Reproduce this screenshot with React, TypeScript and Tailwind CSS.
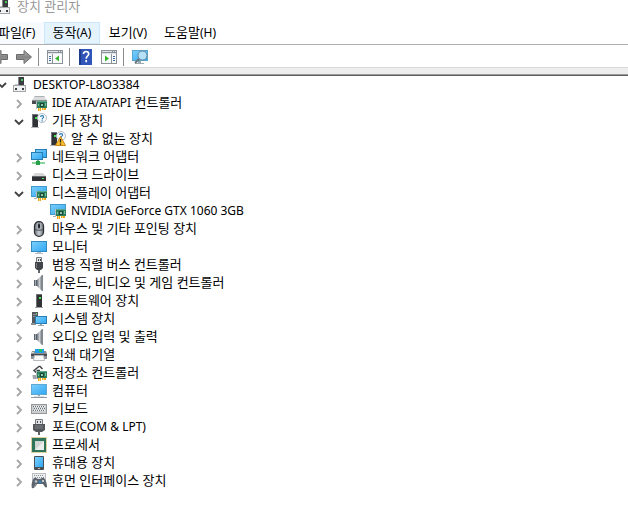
import React, { useState } from "react";

type IconName =
  | "root" | "ide" | "other" | "unknown" | "network" | "disk" | "display" | "mouse" | "monitor" | "usb"
  | "sound" | "software" | "system" | "printer" | "storage" | "computer" | "keyboard" | "port" | "cpu"
  | "portable" | "hid";

const Defs = () => (
  <svg width="0" height="0" className="absolute" aria-hidden="true">
    <defs>
      <linearGradient id="screen" x1="0" y1="0" x2="1" y2="1">
        <stop offset="0" stopColor="#7cd0fb" />
        <stop offset="1" stopColor="#2fa6f3" />
      </linearGradient>
      <linearGradient id="metal" x1="0" y1="0" x2="1" y2="0">
        <stop offset="0" stopColor="#6b7178" />
        <stop offset="0.5" stopColor="#c9ced3" />
        <stop offset="1" stopColor="#70767c" />
      </linearGradient>
      <linearGradient id="arrow" x1="0" y1="0" x2="0" y2="1">
        <stop offset="0" stopColor="#b5b5b5" />
        <stop offset="0.5" stopColor="#858585" />
        <stop offset="1" stopColor="#a8a8a8" />
      </linearGradient>
    </defs>
  </svg>
);

const Board = () => (
  <g>
    <path d="M5.5 6v8" stroke="#b4babf" />
    <rect x="6" y="6" width="10" height="7" fill="#2b7f5d" />
    <path d="M6 6.5h10" stroke="#5ca888" />
    <rect x="9" y="8" width="4" height="4" fill="#1b4638" />
    <rect x="10" y="9" width="2" height="2" fill="#8cc9ab" />
    <path d="M14 8h1v3h-1zM7 9h1v2H7z" fill="#79bd9c" />
    <path d="M7 13h3v3H7zM11 13h4v2h-4z" fill="#eba21c" />
    <path d="M8.5 13v3M12.5 13v2" stroke="#fbd66d" />
  </g>
);

const Question = () => (
  <g>
    <circle cx="11" cy="5" r="4.5" fill="#f7fbfe" stroke="#b3bec7" />
    <path d="M9.6 4c0-1.9 3-1.9 3 0 0 1.2-1.5 1.1-1.5 2.4M11.1 7.2v1.2" fill="none" stroke="#2679b8" strokeWidth="1.1" />
  </g>
);

const Tower = () => (
  <g>
    <path d="M1 1h6v13H1z" fill="#303236" />
    <path d="M1 1h1v13H1zM1 1h6v1H1z" fill="#74787d" />
    <path d="M0 14h8v1H0z" fill="#b3b6b9" />
    <path d="M4 4h2v2H4z" fill="#3fe24d" />
  </g>
);

const art: Record<IconName, React.ReactNode> = {
  root: (
    <g>
      <path d="M6 0h6v8H6z" fill="#3b3d40" />
      <path d="M6 0h1v8H6z" fill="#85888b" />
      <path d="M9 2h2v2H9z" fill="#45c95a" />
      <path d="M3 7h3v1h6v1H2z" fill="#c4c7ca" />
      <path d="M1 8h13v7H1z" fill="#a3a6a9" />
      <path d="M2 9h11v5H2z" fill="#f0f1f2" />
      <path d="M3 11h2v2H3zM10 11h2v2h-2z" fill="#3a3c3f" />
    </g>
  ),
  ide: (
    <g>
      <path d="M4 1h9l3 4H1z" fill="#d9dbdd" />
      <path d="M4 1h9l1 1H3z" fill="#aeb1b4" />
      <path d="M1 5h15v4H1z" fill="#4a4d50" />
      <path d="M1 5h15v1H1z" fill="#8a8d90" />
      <Board />
    </g>
  ),
  other: <g><Tower /><Question /></g>,
  unknown: (
    <g>
      <Tower />
      <Question />
      <path d="M10.5 5.5 15.5 14.5h-10z" fill="#fdbf2d" stroke="#c98a18" />
      <path d="M10.5 8v3.6M10.5 12.4v1.3" stroke="#262626" strokeWidth="1.3" />
    </g>
  ),
  network: (
    <g>
      <rect x="4.5" y="0.5" width="11" height="8" fill="url(#screen)" stroke="#287db3" />
      <rect x="0.5" y="3.5" width="11" height="7" fill="url(#screen)" stroke="#287db3" />
      <path d="M6 11h2v2H6z" fill="#59b873" />
      <path d="M1 13h13v2H1z" fill="#8ad49e" />
      <path d="M5 12h4v4H5z" fill="#27a04a" />
    </g>
  ),
  disk: (
    <g>
      <path d="M4 6h8l3 3H1z" fill="#d8d8d8" />
      <path d="M1 9h14v5H1z" fill="#2f3134" />
      <path d="M1 9h14v1H1z" fill="#65686b" />
      <path d="M11 11h2v1h-2z" fill="#4ee85d" />
    </g>
  ),
  display: (
    <g>
      <rect x="0.5" y="1.5" width="15" height="10" fill="url(#screen)" stroke="#4199cc" />
      <path d="M3 13h3v1H3z" fill="#a8b2b9" />
      <Board />
    </g>
  ),
  mouse: (
    <g>
      <rect x="3.5" y="0.7" width="9" height="14.6" rx="4.4" fill="url(#metal)" stroke="#2c3035" strokeWidth="1.3" />
      <path d="M8 1v7M4 8.5c2 1 6 1 8 0" fill="none" stroke="#4a4f55" />
      <rect x="7" y="3" width="2" height="4" rx="1" fill="#1c2026" />
    </g>
  ),
  monitor: (
    <g>
      <rect x="0.5" y="2.5" width="15" height="10" fill="url(#screen)" stroke="#308abd" />
      <path d="M6 13h4v1h2v1H4v-1h2z" fill="#b6c0c6" />
    </g>
  ),
  usb: (
    <g>
      <path d="M5.5 0.5h5v5h-5z" fill="#e3e5e7" stroke="#777b7f" />
      <path d="M7 2h1v2H7zM9 2h1v2H9z" fill="#484c50" />
      <path d="M4 5h8v6l-2 2H6l-2-2z" fill="#414549" />
      <path d="M5 6h1v5H5z" fill="#74797e" />
      <path d="M7 13h2v3H7z" fill="#606468" />
    </g>
  ),
  sound: (
    <g>
      <path d="M3 5h3v6H3z" fill="#59626b" />
      <path d="M6 5 11 0v16L6 11z" fill="url(#metal)" />
      <path d="M11.5 0v16" stroke="#7f8992" />
      <path d="M4 5h1v6H4z" fill="#a2abb3" />
    </g>
  ),
  software: (
    <g>
      <path d="M5 1h6v13H5z" fill="#303236" />
      <path d="M5 1h1v13H5zM5 1h6v1H5z" fill="#6c7074" />
      <path d="M4 14h8v1H4z" fill="#9da1a5" />
      <path d="M8 4h2v2H8z" fill="#41e34e" />
    </g>
  ),
  system: (
    <g>
      <path d="M1 1h6v12H1z" fill="#54585c" />
      <path d="M2 3h4v1H2zM2 5h4v1H2z" fill="#8d9296" />
      <path d="M0 12h5v2H0z" fill="#8d9296" />
      <path d="M5 2h1v1H5z" fill="#50e35b" />
      <rect x="4.5" y="5.5" width="11" height="7" fill="url(#screen)" stroke="#287db3" />
      <path d="M9 13h2v1h2v1H7v-1h2z" fill="#9ba5ac" />
    </g>
  ),
  printer: (
    <g>
      <path d="M4 2h9v4H4z" fill="#1f9ee9" />
      <path d="M8 2h3v3H8z" fill="#27c15d" />
      <path d="M1 4h3v2h9V4h2l1 3v5H0V7z" fill="#8b8f93" />
      <path d="M0 7h16v2H0z" fill="#484b4f" />
      <path d="M1 5h2v1H1z" fill="#d4d7da" />
      <path d="M3.5 8.5h9l1 5h-11z" fill="#fafafa" stroke="#b5b9bc" />
    </g>
  ),
  storage: (
    <g>
      <path d="M8.5 1 3 5.5 8 10M8.5 1l3 3M5.5 5.5H9" fill="none" stroke="#414549" strokeWidth="1.5" />
      <path d="M1 10h7v4H2z" fill="#c6c9cb" />
      <path d="M2 11h5M2 13h5" stroke="#7f8488" />
      <Board />
    </g>
  ),
  computer: (
    <g>
      <rect x="0.5" y="1.5" width="15" height="10" fill="url(#screen)" stroke="#5da9d3" />
      <path d="M7 12h2v1H7z" fill="#9ba8b0" />
      <path d="M0 14h16v1H0z" fill="#8c9aa3" />
      <path d="M3 13h10v1H3z" fill="#d5dde1" />
    </g>
  ),
  keyboard: (
    <g>
      <rect x="0.5" y="3.5" width="15" height="9" fill="#cbced0" stroke="#96999c" />
      <path d="M2 5.5h12M3 7.5h11M2 9.5h12" stroke="#f5f6f7" />
      <path d="M2 5.5h12M3 7.5h11M2 9.5h12" stroke="#6a6f74" strokeDasharray="1 1" />
    </g>
  ),
  port: (
    <g>
      <path d="M4.5 0.5h7v5h-7z" fill="#e0e2e4" stroke="#777b7f" />
      <path d="M6 2h1v2H6zM9 2h1v2H9z" fill="#4c5054" />
      <path d="M2 5h12v6l-3 2H5l-3-2z" fill="#53565a" />
      <path d="M4 7h8M4 9h8" stroke="#7f8387" />
      <path d="M7 13h2v3H7z" fill="#606468" />
    </g>
  ),
  cpu: (
    <g>
      <rect x="0.5" y="0.5" width="15" height="15" fill="#ffffff" stroke="#b9a04c" strokeDasharray="1 1" />
      <path d="M1 1h14v14H1z" fill="#2f7358" />
      <path d="M4 4h9v9H4z" fill="#d0d4d2" />
      <path d="M4 13 13 4v9z" fill="#eceeed" />
    </g>
  ),
  portable: (
    <g>
      <rect x="3" y="1" width="10" height="14" rx="1" fill="#494f55" />
      <path d="M4 2h8v10H4z" fill="url(#screen)" />
      <path d="M7 13h2v1H7z" fill="#b9c0c5" />
    </g>
  ),
  hid: (
    <g>
      <rect x="1.5" y="0.5" width="13" height="7" fill="#eceeef" stroke="#b9bdc0" />
      <path d="M3 2.5h10M4 4.5h10" stroke="#8a8f93" strokeDasharray="1 1" />
      <path d="M3 5c2-1 3 1 5 1s3-2 5-1c2 2 3 6 3 9-2 2-3-2-4-3H6c-1 2-3 5-5 4-1-2 0-8 2-10z" fill="#5b646d" />
      <path d="M3 14c1-1 1-2 2-3" fill="none" stroke="#9aa3ab" />
      <circle cx="5" cy="8.5" r="1.3" fill="#c2c9cf" />
      <circle cx="9" cy="9" r="1.2" fill="#2c8dcb" />
      <path d="M11 7h2v2h-2z" fill="#c2c9cf" />
    </g>
  ),
};

const Icon = ({ name }: { name: IconName }) => (
  <svg viewBox="0 0 16 16" className="size-4 shrink-0" aria-hidden="true">{art[name]}</svg>
);

const Chevron = ({ open }: { open: boolean }) => (
  <svg viewBox="0 0 10 10" className="size-[10px]" fill="none" strokeWidth="1.8" aria-hidden="true">
    {open ? <path d="M1 3l4 4 4-4" stroke="#404040" /> : <path d="M3 1l4 4-4 4" stroke="#a6a6a6" />}
  </svg>
);

type Device = { label: string; icon: IconName; children?: Device[]; open?: boolean };

const devices: Device[] = [
  { label: "IDE ATA/ATAPI 컨트롤러", icon: "ide" },
  { label: "기타 장치", icon: "other", open: true, children: [{ label: "알 수 없는 장치", icon: "unknown" }] },
  { label: "네트워크 어댑터", icon: "network" },
  { label: "디스크 드라이브", icon: "disk" },
  { label: "디스플레이 어댑터", icon: "display", open: true, children: [{ label: "NVIDIA GeForce GTX 1060 3GB", icon: "display" }] },
  { label: "마우스 및 기타 포인팅 장치", icon: "mouse" },
  { label: "모니터", icon: "monitor" },
  { label: "범용 직렬 버스 컨트롤러", icon: "usb" },
  { label: "사운드, 비디오 및 게임 컨트롤러", icon: "sound" },
  { label: "소프트웨어 장치", icon: "software" },
  { label: "시스템 장치", icon: "system" },
  { label: "오디오 입력 및 출력", icon: "sound" },
  { label: "인쇄 대기열", icon: "printer" },
  { label: "저장소 컨트롤러", icon: "storage" },
  { label: "컴퓨터", icon: "computer" },
  { label: "키보드", icon: "keyboard" },
  { label: "포트(COM & LPT)", icon: "port" },
  { label: "프로세서", icon: "cpu" },
  { label: "휴대용 장치", icon: "portable" },
  { label: "휴먼 인터페이스 장치", icon: "hid" },
];

/* Latin runs are set one size below Hangul so that both look equally large. */
const Label = ({ text }: { text: string }) => (
  <span className="block whitespace-nowrap pb-[2px]">
    {text.split(/([A-Za-z0-9(][A-Za-z0-9 &/()-]*[A-Za-z0-9)])/).map((part, i) =>
      i % 2 ? <span key={i} className="text-[12px]">{part}</span> : part,
    )}
  </span>
);

const Node = ({ device }: { device: Device }) => {
  const [open, setOpen] = useState(Boolean(device.open));
  return (
    <li role="treeitem" aria-expanded={open}>
      <div className="flex h-[18px] items-center pl-[14px]">
        <button type="button" aria-label={device.label} onClick={() => setOpen(!open)} className="mr-[7px] pt-[2px]">
          <Chevron open={open} />
        </button>
        <Icon name={device.icon} />
        <span className="ml-[5px]"><Label text={device.label} /></span>
      </div>
      {open && device.children && (
        <ul role="group">
          {device.children.map((child) => (
            <li key={child.label} role="treeitem" className="flex h-[18px] items-center gap-[5px] pl-[50px]">
              <Icon name={child.icon} />
              <Label text={child.label} />
            </li>
          ))}
        </ul>
      )}
    </li>
  );
};

const Separator = () => <span className="h-[18px] w-px bg-[#8c8c8c]" />;

const Arrow = ({ back }: { back?: boolean }) => (
  <svg viewBox="0 0 16 16" className="size-4" aria-hidden="true">
    <path
      d={back ? "M0.5 8 9 1.5v4h6.5v5H9v4z" : "M15.5 8 8 1.5v4H0.5v5H8v4z"}
      fill="url(#arrow)"
      stroke="#6b6b6b"
    />
  </svg>
);

const Pane = ({ flip }: { flip?: boolean }) => (
  <svg viewBox="0 0 16 14" className="h-[14px] w-4" aria-hidden="true">
    <rect x="0.5" y="0.5" width="15" height="13" fill="#f8f9fa" stroke="#8b9299" />
    <path d="M0 0h16v4H0z" fill="#8b9299" />
    <path d="M1 1.5h10M12 1.5h1M14 1.5h1M1 3.5h14" stroke="#dfe3e6" />
    {flip ? (
      <g>
        <path d="M10.5 4v9" stroke="#8b9299" />
        <path d="M12 6.5h2M12 8.5h2M12 10.5h2" stroke="#3d6c9d" />
        <path d="M4 5.5v6L8 8.5z" fill="#38b62b" />
      </g>
    ) : (
      <g>
        <path d="M5.5 4v9" stroke="#8b9299" />
        <path d="M2 6.5h2M2 8.5h2M2 10.5h2" stroke="#3d6c9d" />
        <path d="M12 5.5v6L8 8.5z" fill="#38b62b" />
      </g>
    )}
  </svg>
);

export default function App() {
  return (
    <div className="min-h-screen overflow-hidden bg-white font-['Noto_Sans','Noto_Sans_CJK_KR',sans-serif] text-[13px] leading-[18px] text-black">
      <Defs />
      <header className="flex h-[22px] items-start gap-[5px] text-[#999999]">
        <span className="-ml-1 -mt-px"><Icon name="root" /></span>
        <h1 className="leading-3">장치 관리자</h1>
      </header>
      <nav className="flex h-[22px] items-stretch">
        <button type="button" className="-ml-[10px] w-[54px] bg-[#f7fbff] pl-2 text-left"><Label text="파일(F)" /></button>
        <button type="button" className="w-14 border border-[#cce8ff] bg-[#e5f3ff]"><Label text="동작(A)" /></button>
        <button type="button" className="w-14"><Label text="보기(V)" /></button>
        <button type="button" className="w-[68px]"><Label text="도움말(H)" /></button>
      </nav>
      <div className="flex h-[23px] items-center border-t border-[#b0b0b0] pt-[2px]">
        <button type="button" aria-label="뒤로" className="-ml-2"><Arrow back /></button>
        <button type="button" aria-label="앞으로" className="ml-2 mr-[6px]"><Arrow /></button>
        <Separator />
        <button type="button" aria-label="콘솔 트리" className="ml-2 mr-[6px]"><Pane /></button>
        <Separator />
        <button type="button" aria-label="도움말" className="mx-[9px]">
          <svg viewBox="0 0 13 16" className="h-4 w-[13px]" aria-hidden="true">
            <rect width="13" height="16" fill="#2f55b8" />
            <path d="M0 0h2v16H0z" fill="#1f3c8c" />
            <path d="M4.5 5c0-3.4 5.2-3.3 5.2 0 0 2-2.5 2.1-2.5 4.7M7.2 11v2.2" fill="none" stroke="#fff" strokeWidth="1.7" />
          </svg>
        </button>
        <button type="button" aria-label="작업 창" className="mr-[6px]"><Pane flip /></button>
        <Separator />
        <button type="button" aria-label="하드웨어 변경 사항 검색" className="ml-2">
          <svg viewBox="0 0 17 16" className="h-4 w-[17px]" aria-hidden="true">
            <rect x="0.5" y="1.5" width="15" height="10" fill="url(#screen)" stroke="#5aa5cd" />
            <path d="M6 12h3v2h3v1H3v-1h3z" fill="#9ba8b0" />
            <path d="M8 9 3 14" stroke="#68747c" strokeWidth="2" />
            <circle cx="10.5" cy="6.5" r="4.5" fill="#b4e0f8" stroke="#66899d" />
          </svg>
        </button>
      </div>
      <div className="h-[8px] border-b border-t border-b-[#9a9a9a] border-t-[#d9d9d9] bg-[#eeeeee]" />
      <ul role="tree" className="border-t border-[#5f5f5f]">
        <li role="treeitem" aria-expanded="true">
          <div className="flex h-[18px] items-center">
            <button type="button" aria-label="DESKTOP-L8O3384" className="-ml-[3px] mr-[5px]"><Chevron open /></button>
            <Icon name="root" />
            <span className="ml-[5px]"><Label text="DESKTOP-L8O3384" /></span>
          </div>
          <ul role="group">
            {devices.map((device) => <Node key={device.label} device={device} />)}
          </ul>
        </li>
      </ul>
    </div>
  );
}
